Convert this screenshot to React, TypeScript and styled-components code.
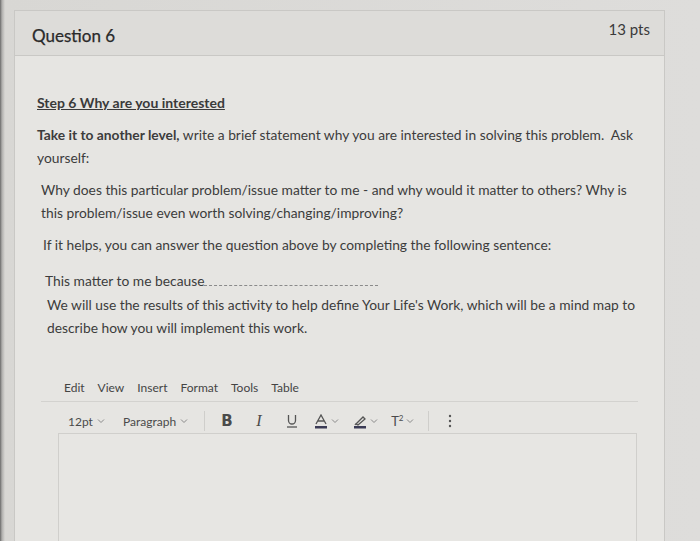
import React from 'react';
import styled, { createGlobalStyle } from 'styled-components';

const GlobalStyle = createGlobalStyle`
  html, body {
    margin: 0;
    padding: 0;
    background: #dedddb;
    font-family: Lato, "Open Sans", sans-serif;
    color: #383838;
  }
`;

const Page = styled.div`
  width: 700px;
  height: 541px;
  overflow: hidden;
  box-sizing: border-box;
  padding: 10px 35px 0 14px;
  background: linear-gradient(90deg, #6a6a6a 0, #b0afad 2px, #d8d7d4 5px, #dedddb 100%);
`;

const Card = styled.div`
  border: 1px solid #c9c8c5;
  background: #e6e5e2;
  height: 560px;
`;

const Header = styled.div`
  height: 44px;
  display: flex;
  align-items: flex-start;
  justify-content: space-between;
  padding: 0 14px 0 17px;
  background: #dddcd9;
  border-bottom: 1px solid #c9c8c5;
`;

const Title = styled.h2`
  margin: 14px 0 0;
  font-size: 17px;
  font-weight: 400;
  color: #2a2a2a;
  -webkit-text-stroke: 0.25px #2a2a2a;
`;

const Points = styled.span`
  margin-top: 9px;
  font-size: 15px;
  color: #3a3a3a;
`;

const Body = styled.div`
  padding: 38px 24px 0 22px;
`;

const StepHeading = styled.p`
  margin: 0 0 12px;
  font-size: 14px;
  text-decoration: underline;
  font-weight: 700;
  color: #3a3a3a;
`;

const Para = styled.p<{ $indent?: number; $gap?: number }>`
  margin: 0 0 ${({ $gap }) => $gap ?? 9}px;
  padding-left: ${({ $indent }) => $indent ?? 0}px;
  font-size: 13.8px;
  line-height: 23px;
  color: #3c3c3c;
`;

const Blank = styled.span`
  display: inline-block;
  width: 174px;
  border-bottom: 1px dashed #8a8a8a;
`;

const Editor = styled.div`
  margin-top: 41px;
`;

const MenuBar = styled.div`
  display: flex;
  gap: 13px;
  padding: 0 0 6px 23px;
  margin: 0 2px 0 4px;
  border-bottom: 1px solid #d3d2cf;
  font-size: 12px;
  color: #444;
`;

const Toolbar = styled.div`
  display: flex;
  align-items: center;
  height: 28px;
  padding-left: 31px;
  margin-top: 5px;
  font-size: 12px;
  color: #4a4a4a;
`;

const Drop = styled.span<{ $w?: number }>`
  display: inline-flex;
  align-items: center;
  gap: 4px;
  min-width: ${({ $w }) => $w ?? 0}px;
`;

const Chevron = () => (
  <svg width="8" height="6" viewBox="0 0 8 6">
    <path d="M1 1.5 L4 4.5 L7 1.5" fill="none" stroke="#8a8a8a" strokeWidth="1" />
  </svg>
);

const Divider = styled.span<{ $left?: number; $right?: number }>`
  width: 1px;
  height: 20px;
  background: #cfcecb;
  margin: 0 ${({ $right }) => $right ?? 16}px 0 ${({ $left }) => $left ?? 16}px;
`;

const ToolButton = styled.span<{ $w?: number }>`
  display: inline-flex;
  align-items: center;
  gap: 3px;
  width: ${({ $w }) => $w ?? 32}px;
  font-size: 15px;
  color: #4b4b4b;
`;

const Bold = styled.span`
  font-family: "DejaVu Sans", sans-serif;
  font-weight: 700;
  font-size: 15px;
`;

const Italic = styled.span`
  font-family: "Liberation Serif", serif;
  font-style: italic;
  font-size: 16px;
`;

const ContentArea = styled.div`
  margin: -2px 3px 0 21px;
  height: 140px;
  border: 1px solid #d0cfcc;
  background: #e7e6e3;
`;

export default function App() {
  return (
    <>
      <GlobalStyle />
      <Page>
        <Card>
          <Header>
            <Title>Question 6</Title>
            <Points>13 pts</Points>
          </Header>
          <Body>
            <StepHeading>Step 6 Why are you interested</StepHeading>
            <Para>
              <b>Take it to another level,</b> write a brief statement why you are interested in solving this problem.&nbsp; Ask yourself:
            </Para>
            <Para $indent={4}>
              Why does this particular problem/issue matter to me - and why would it matter to others? Why is this problem/issue even worth solving/changing/improving?
            </Para>
            <Para $indent={6} $gap={13}>
              If it helps, you can answer the question above by completing the following sentence:
            </Para>
            <Para $indent={8} $gap={1}>
              This matter to me because<Blank />
            </Para>
            <Para $indent={10}>
              We will use the results of this activity to help define Your Life's Work, which will be a mind map to describe how you will implement this work.
            </Para>
            <Editor>
              <MenuBar>
                <span>Edit</span>
                <span>View</span>
                <span>Insert</span>
                <span>Format</span>
                <span>Tools</span>
                <span>Table</span>
              </MenuBar>
              <Toolbar>
                <Drop $w={55}>12pt <Chevron /></Drop>
                <Drop>Paragraph <Chevron /></Drop>
                <Divider />
                <ToolButton $w={35}><Bold>B</Bold></ToolButton>
                <ToolButton $w={30}><Italic>I</Italic></ToolButton>
                <ToolButton $w={28}>
                  <svg width="12" height="14" viewBox="0 0 12 14">
                    <path d="M2.5 1 V6.5 a3.5 3.5 0 0 0 7 0 V1" fill="none" stroke="#555" strokeWidth="1.3" />
                    <path d="M1 13 H11" stroke="#555" strokeWidth="1.3" />
                  </svg>
                </ToolButton>
                <ToolButton $w={39}>
                  <svg width="14" height="15" viewBox="0 0 14 15">
                    <path d="M2 10 L7 1 L12 10 M4 7 H10" fill="none" stroke="#555" strokeWidth="1.3" />
                    <rect x="1" y="12" width="12" height="2.5" fill="#3b3b55" />
                  </svg>
                  <Chevron />
                </ToolButton>
                <ToolButton $w={38}>
                  <svg width="14" height="15" viewBox="0 0 14 15">
                    <path d="M3 10 L10 3 L12 5 L5 11 Z M2 11 L3 9.5" fill="none" stroke="#555" strokeWidth="1.3" />
                    <rect x="1" y="12" width="12" height="2.5" fill="#3b3b55" />
                  </svg>
                  <Chevron />
                </ToolButton>
                <ToolButton $w={30}>
                  <span style={{ fontSize: 13 }}>T<sup style={{ fontSize: 8 }}>2</sup></span>
                  <Chevron />
                </ToolButton>
                <Divider $left={7} $right={19} />
                <svg width="4" height="14" viewBox="0 0 4 14">
                  <circle cx="2" cy="2" r="1.2" fill="#555" />
                  <circle cx="2" cy="7" r="1.2" fill="#555" />
                  <circle cx="2" cy="12" r="1.2" fill="#555" />
                </svg>
              </Toolbar>
              <ContentArea />
            </Editor>
          </Body>
        </Card>
      </Page>
    </>
  );
}
